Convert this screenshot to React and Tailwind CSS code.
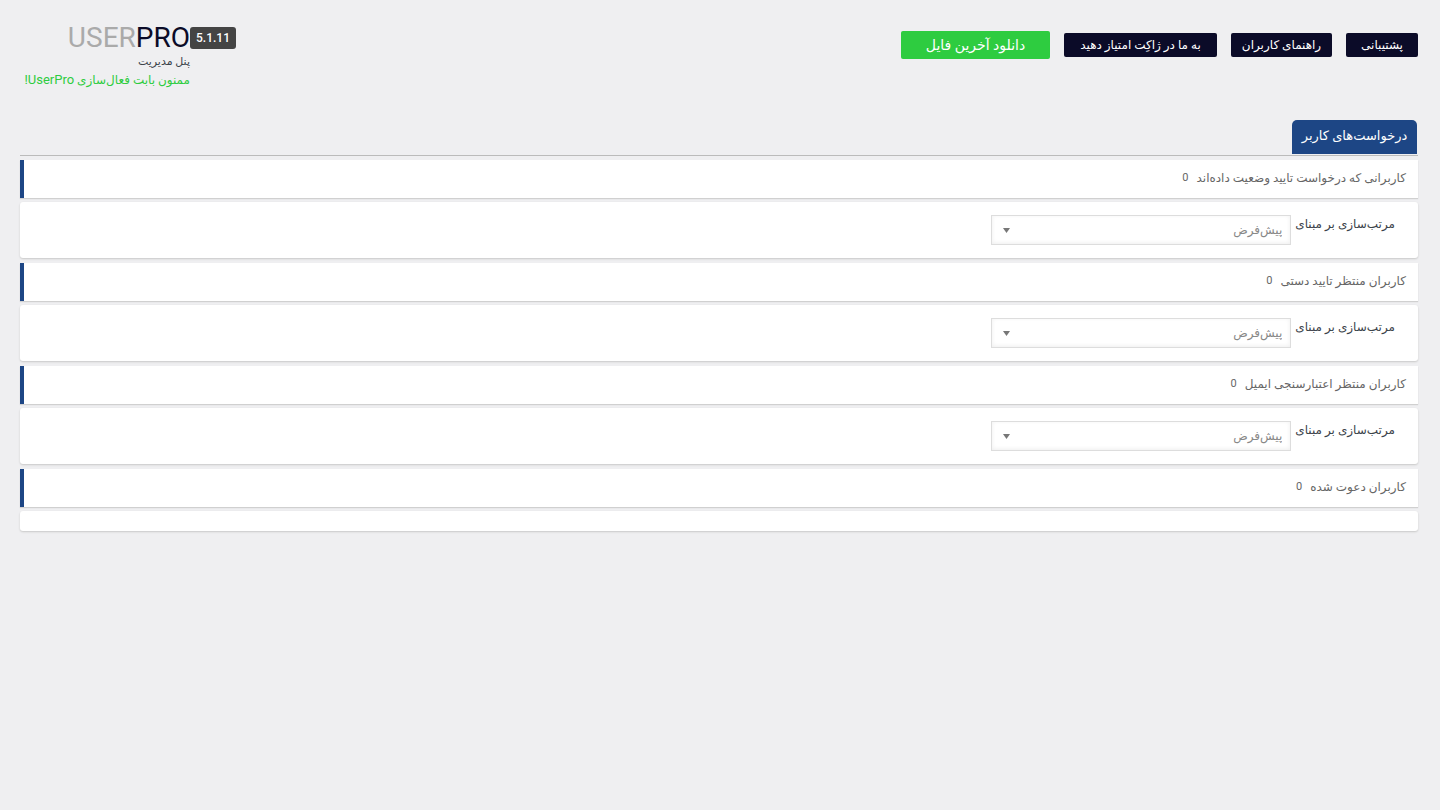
const links = [
  { label: "پشتیبانی", size: "min-w-[72px]" },
  { label: "راهنمای کاربران", size: "min-w-[101px]" },
  { label: "به ما در ژاکِت امتیاز دهید", size: "min-w-[153px]" },
];

const sections = [
  { id: "verify", title: "کاربرانی که درخواست تایید وضعیت داده‌اند", count: 0, sortable: true },
  { id: "manual", title: "کاربران منتظر تایید دستی", count: 0, sortable: true },
  { id: "email", title: "کاربران منتظر اعتبارسنجی ایمیل", count: 0, sortable: true },
  { id: "invited", title: "کاربران دعوت شده", count: 0, sortable: false },
];

function SortField({ id }) {
  return (
    <div className="flex h-full items-start gap-1 pt-3 pr-[23px]">
      <label htmlFor={id} className="text-[12px] leading-5 text-[#3c434a]">
        مرتب‌سازی بر مبنای
      </label>
      <div className="relative mt-px w-[300px]">
        <select
          id={id}
          className="block h-[30px] w-full appearance-none border border-[#ddd] bg-white px-2 text-[12px] text-[#888] shadow-[inset_0_-1px_4px_#eee]"
        >
          <option>پیش‌فرض</option>
        </select>
        <svg
          viewBox="0 0 7 5"
          className="pointer-events-none absolute top-[13px] left-3 h-[5px] w-[7px] fill-[#777]"
          aria-hidden="true"
        >
          <path d="M0 0h7L3.5 5z" />
        </svg>
      </div>
    </div>
  );
}

function Section({ section }) {
  return (
    <section className="flex flex-col gap-1">
      <h3 className="flex h-[38px] items-center gap-2 border-l-4 border-[#1d4685] bg-white pr-3 pb-0.5 text-[12px] text-[#666] shadow-[0_1px_1px_#d0d0d0]">
        <span>{section.title}</span>
        <span className="pt-px text-[11px]">{section.count}</span>
      </h3>
      <div
        className={
          section.sortable
            ? "h-14 rounded-[3px] bg-white shadow-[0_1px_2px_#c8c8c8]"
            : "h-5 rounded-[3px] bg-white shadow-[0_1px_2px_#c8c8c8]"
        }
      >
        {section.sortable && <SortField id={section.id} />}
      </div>
    </section>
  );
}

export default function App() {
  return (
    <div
      dir="rtl"
      className="min-h-screen bg-[#efeff1] pr-[22px] pl-5 font-['Roboto','DejaVu_Sans',sans-serif] text-[#3c434a]"
    >
      <header className="flex h-[120px] items-start justify-between pt-[27px]">
        <nav className="flex items-center gap-[14px] pt-1">
          {links.map((link) => (
            <a
              key={link.label}
              href="#"
              className={`${link.size} flex h-6 items-center justify-center rounded-xs bg-[#0b0b28] text-[12px] whitespace-nowrap text-white`}
            >
              {link.label}
            </a>
          ))}
          <a
            href="#"
            className="flex h-7 min-w-[149px] items-center justify-center rounded-xs bg-[#2ecc40] text-[14px] whitespace-nowrap text-white"
          >
            دانلود آخرین فایل
          </a>
        </nav>
        <div className="flex items-start">
          <span className="flex h-[22px] w-[46px] items-center justify-center rounded-[3px] bg-[#444] text-[12px] font-medium text-white">
            5.1.11
          </span>
          <div className="flex min-w-[170px] flex-col items-start">
            <h1 dir="ltr" className="text-[28px] leading-[22px] text-[#aaa]">
              USER<span className="text-[#0b0b28]">PRO</span>
            </h1>
            <p className="mt-1 text-[11px] leading-[18px]">پنل مدیریت</p>
            <p className="text-[12px] leading-[18px] text-[#2ecc40]">
              ممنون بابت فعال‌سازی <span className="text-[13px]">UserPro!</span>
            </p>
          </div>
        </div>
      </header>
      <main>
        <nav className="flex border-b border-[#bbb] pr-px pb-px">
          <a
            href="#"
            className="flex h-[34px] min-w-[125px] items-center justify-center rounded-t-[5px] bg-[#1d4685] pb-0.5 text-[13px] whitespace-nowrap text-white"
          >
            درخواست‌های کاربر
          </a>
        </nav>
        <div className="flex flex-col gap-[5px] pt-1">
          {sections.map((section) => (
            <Section key={section.id} section={section} />
          ))}
        </div>
      </main>
    </div>
  );
}
